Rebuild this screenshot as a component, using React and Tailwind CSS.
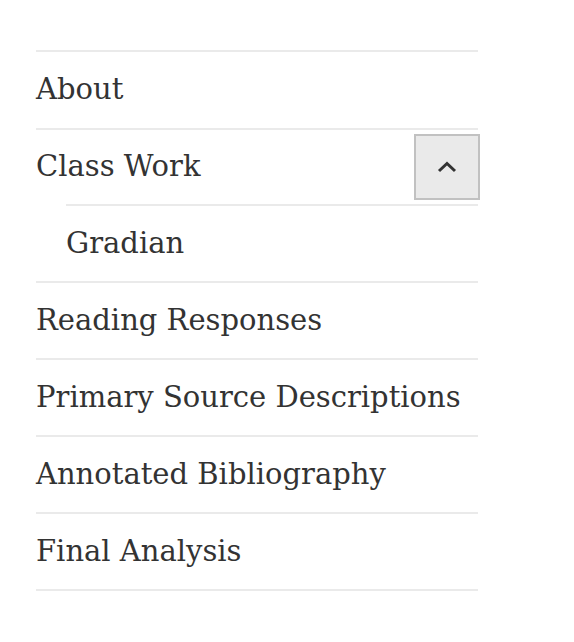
import React from "react";

const items = [
  { label: "About", h: "h-[76px]" },
  { label: "Class Work", h: "h-[74px]", open: true, children: ["Gradian"] },
  { label: "Reading Responses", h: "h-[75px]" },
  { label: "Primary Source Descriptions", h: "h-[75px]" },
  { label: "Annotated Bibliography", h: "h-[75px]" },
  { label: "Final Analysis", h: "h-[75px]" },
];

function Chevron() {
  return (
    <svg width="20" height="12" viewBox="0 0 20 12" fill="none">
      <path d="M2 10 L10 2.5 L18 10" stroke="#333" strokeWidth="3" />
    </svg>
  );
}

export default function App() {
  return (
    <div className="min-h-screen bg-white pt-[50px] pl-[36px]">
      <ul
        className="w-[442px] border-b-2 border-[#eaeaea] text-[#333] text-[29px]"
        style={{ fontFamily: '"DejaVu Serif", "Liberation Serif", serif' }}
      >
        {items.map((item) => (
          <li key={item.label} className="border-t-2 border-[#eaeaea]">
            <div className={`flex ${item.h} items-center justify-between`}>
              <span>{item.label}</span>
              {item.open && (
                <button className="-mr-[2px] flex h-[66px] w-[66px] items-center justify-center border-2 border-[#c1c1c1] bg-[#eaeaea]">
                  <Chevron />
                </button>
              )}
            </div>
            {item.children && (
              <ul className="ml-[30px]">
                {item.children.map((c) => (
                  <li key={c} className="border-t-2 border-[#eaeaea]">
                    <div className="flex h-[75px] items-center">{c}</div>
                  </li>
                ))}
              </ul>
            )}
          </li>
        ))}
      </ul>
    </div>
  );
}
